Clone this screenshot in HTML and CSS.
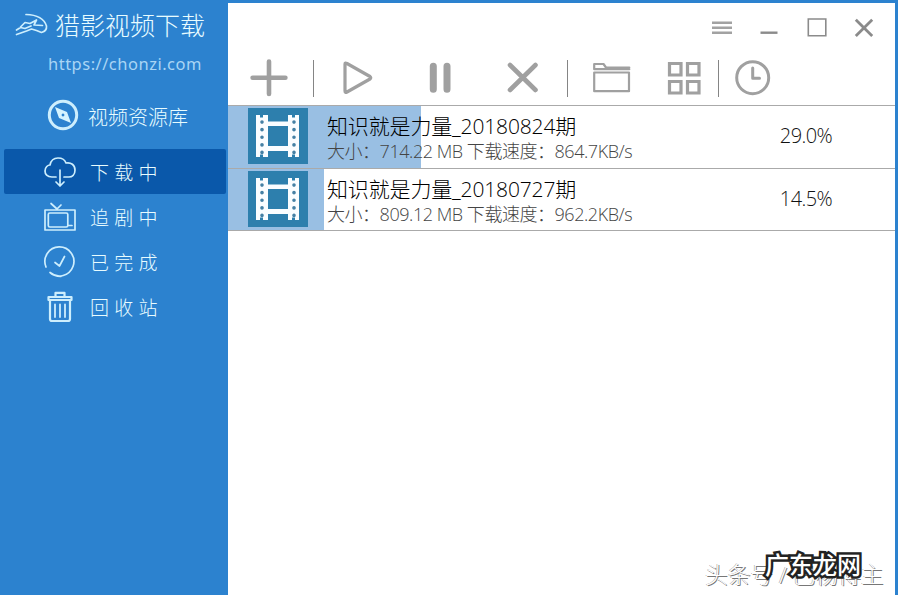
FILE: index.html
```
<!DOCTYPE html>
<html lang="zh-CN">
<head>
<meta charset="utf-8">
<title>猎影视频下载</title>
<link rel="stylesheet" href="styles.css">
</head>
<body>
<div class="window">
  <aside class="sidebar">
    <div class="brand">
      <svg width="34" height="24" viewBox="0 0 34 24"><path d="M11 1.5Q28 2 31.5 13Q32 18 26.5 19.5L21.5 17.5L16.5 16L11.5 18L1.5 21.5M1.5 17L5.5 14.5L10 15.5L16 13M5.5 14L10 9.5L15 10.5L21.5 7L19 12L27.5 12.5"/></svg>
      <span class="brand-name">猎影视频下载</span>
    </div>
    <div class="site">https://chonzi.com</div>
    <nav>
      <a class="item library">
        <svg width="34" height="34" viewBox="0 0 34 34"><circle cx="17" cy="17" r="13.7" stroke-width="3"/><path class="solid" fill-rule="evenodd" d="M9 9L21 14L25 25L13 20ZM17 15.6a1.4 1.4 0 1 0 .01 0Z"/></svg>
        <span>视频资源库</span>
      </a>
      <a class="item active">
        <svg width="34" height="34" viewBox="0 0 34 34"><path d="M13 22H9C4 22 2 19 2 16C2 12 5 10 7 10C8 5 11 3 15 3C19 3 22 5 23 8C28 7 32 10 32 15C32 20 29 22 26 22H21M17 15V31M13 27L17 31L21 27"/></svg>
        <span>下载中</span>
      </a>
      <a class="item">
        <svg width="34" height="34" viewBox="0 0 34 34"><path d="M2 10H32V30H2ZM8 3.5L14 9L18 5"/><rect x="5.3" y="13" width="19.5" height="14" rx="1.5"/><path d="M25 25.5H29"/></svg>
        <span>追剧中</span>
      </a>
      <a class="item">
        <svg width="34" height="34" viewBox="0 0 34 34"><path d="M3 22A14.5 14.5 0 1 1 7 27.5C9 29.5 13 31.5 18 31.4M12 17.5L16.5 21L21.5 11.5"/></svg>
        <span>已完成</span>
      </a>
      <a class="item">
        <svg width="34" height="34" viewBox="0 0 34 34"><path stroke-width="2.2" d="M5.5 7H28.5V10H5.5ZM12.5 6V2.8H21.5V6M7 11V29Q7 31 9 31H25Q27 31 27 29V11"/><path stroke-width="1.8" d="M12 14.5V27M17 14.5V27M22 14.5V27"/></svg>
        <span>回收站</span>
      </a>
    </nav>
  </aside>
  <main class="main">
    <header class="titlebar">
      <svg width="22" height="22" viewBox="0 0 22 22"><path class="light" d="M1 5.8H21M1 10.8H21M1 15.8H21"/></svg>
      <svg width="22" height="22" viewBox="0 0 22 22"><path stroke-width="2.4" d="M2.5 15.7H19.5"/></svg>
      <svg width="22" height="22" viewBox="0 0 22 22"><path stroke-width="1.6" d="M2.3 2H19.8V18.8H2.3Z"/></svg>
      <svg width="22" height="22" viewBox="0 0 22 22"><path stroke-width="2.8" d="M2.8 2.8L19.2 19M19.2 2.8L2.8 19"/></svg>
    </header>
    <div class="toolbar">
      <svg width="40" height="40" viewBox="0 0 40 40"><path stroke-width="4.6" d="M3.6 19.8H36.4M20 3.6V36"/></svg>
      <i class="sep after-add"></i>
      <svg class="play" width="40" height="40" viewBox="0 0 40 40"><path stroke-width="3.2" d="M8 6Q8 4.5 10 5.5L33 18.5Q34.5 19.7 33 21L10 34Q8 35 8 33Z"/></svg>
      <svg class="pause" width="40" height="40" viewBox="0 0 40 40"><path stroke-width="7" d="M13.3 8.2V31.3M27 8.2V31.3"/></svg>
      <svg class="remove" width="40" height="40" viewBox="0 0 40 40"><path stroke-width="4.6" d="M7 7L32.5 32M32.5 7L7 32"/></svg>
      <i class="sep after-remove"></i>
      <svg class="folder" width="40" height="40" viewBox="0 0 40 40"><path stroke-width="2.2" d="M2.2 14.5H37V33.2H2.2ZM2.2 11V6H11.5L14 9.5H37.3M2.2 11.2H37.3"/></svg>
      <svg class="grid" width="40" height="40" viewBox="0 0 40 40"><path stroke-width="3.2" stroke-linejoin="miter" d="M5.5 5.5H17V17H5.5ZM23.5 5.5H35V17H23.5ZM5.5 23.5H17V35H5.5ZM23.5 23.5H35V35H23.5Z"/></svg>
      <i class="sep after-grid"></i>
      <svg class="clock" width="40" height="40" viewBox="0 0 40 40"><circle cx="19.7" cy="19.7" r="16" stroke-width="3"/><path stroke-width="3" d="M19.7 10V20.2H26.5"/></svg>
    </div>
    <section class="list">
      <article class="task">
        <div class="progress" style="width:29%"></div>
        <div class="thumb"><svg width="60" height="56" viewBox="0 0 60 56"><path class="film" fill-rule="evenodd" d="M8 7H12V9.5H15V7H20V13.5H40V7H44V9.5H47V7H51V49H47V46.5H44V49H40V43H20V49H15V46.5H12V49H8ZM20 18V38H40V18Z"/><path class="holes" d="M14 14V47M46 14V47"/></svg></div>
        <div class="info"><div class="name">知识就是力量_20180824期</div><div class="meta">大小：714.22 MB 下载速度：864.7KB/s</div></div>
        <div class="percent">29.0%</div>
      </article>
      <article class="task">
        <div class="progress" style="width:14.4%"></div>
        <div class="thumb"><svg width="60" height="56" viewBox="0 0 60 56"><path class="film" fill-rule="evenodd" d="M8 7H12V9.5H15V7H20V13.5H40V7H44V9.5H47V7H51V49H47V46.5H44V49H40V43H20V49H15V46.5H12V49H8ZM20 18V38H40V18Z"/><path class="holes" d="M14 14V47M46 14V47"/></svg></div>
        <div class="info"><div class="name">知识就是力量_20180727期</div><div class="meta">大小：809.12 MB 下载速度：962.2KB/s</div></div>
        <div class="percent">14.5%</div>
      </article>
    </section>
  </main>
  <div class="author">头条号 / 巴杨博主</div>
  <div class="stamp">广东龙网</div>
</div>
</body>
</html>
```
FILE: styles.css
```
* { box-sizing: border-box; }
body {
  margin: 0;
  font-family: "Open Sans", "Noto Sans CJK SC", sans-serif;
  font-weight: 300;
  overflow: hidden;
}
svg { display: block; flex: none; fill: none; stroke-linecap: round; stroke-linejoin: round; }
.window {
  position: relative;
  display: flex;
  width: 898px;
  height: 595px;
  padding: 3px 3px 0 0;
  background: #2c82cf;
}
.sidebar { width: 228px; flex: none; color: #e8fcff; white-space: nowrap; }
.sidebar svg { stroke: #cdeefd; stroke-width: 1.7; }
.brand { display: flex; align-items: center; height: 44px; padding-left: 15px; gap: 6px; }
.brand-name { font-size: 25px; line-height: 44px; }
.site {
  height: 36px;
  padding-left: 48px;
  font: 400 16.5px/34px "Noto Sans", sans-serif;
  letter-spacing: 0.5px;
  color: #a9d5f5;
}
nav { margin-left: 4px; width: 222px; }
.item {
  display: flex;
  align-items: center;
  height: 45px;
  padding-left: 39px;
  gap: 13px;
  font-size: 19px;
  letter-spacing: 5.2px;
  border-radius: 2px;
}
.library { height: 66px; padding: 0 0 2px 42px; gap: 8px; font-size: 20px; letter-spacing: 0; }
.library span { padding-top: 2px; }
.active { background: #0a58aa; }
.sidebar .solid { fill: #d5f4ff; stroke: none; }
.main { flex: 1; background: #fff; }
.titlebar {
  display: flex;
  justify-content: flex-end;
  height: 48px;
  padding: 14px 20px 0 0;
  gap: 25.5px;
}
.titlebar svg { stroke: #8b8b8b; stroke-linecap: butt; stroke-linejoin: miter; }
.titlebar .light { stroke: #a2a2a2; stroke-width: 2.4; }
.toolbar { display: flex; align-items: center; height: 54px; padding-left: 21px; }
.toolbar svg { stroke: #a0a0a0; }
.sep { width: 1px; height: 37px; background: #858585; }
.after-add, .after-remove, .folder { margin-left: 24px; }
.play { margin-left: 23px; }
.pause, .remove { margin-left: 43px; }
.grid { margin-left: 32px; }
.after-grid, .clock { margin-left: 14px; }
.list { border-top: 1px solid #aaa; }
.task {
  position: relative;
  display: flex;
  height: 62.5px;
  padding-left: 20px;
  border-bottom: 1px solid #aaa;
  white-space: nowrap;
}
.progress { position: absolute; left: 0; top: 0; bottom: 0; background: #99bfe3; }
.thumb { position: relative; width: 60px; height: 56px; margin-top: 2px; background: #2d7fad; }
.thumb .film { fill: #fafdff; }
.thumb .holes { stroke: #4580a4; stroke-width: 3.6; stroke-dasharray: 0.1 7.5; }
.info { position: relative; width: 431px; margin-left: 19px; padding-top: 6px; }
.name { font-size: 21px; line-height: 28px; letter-spacing: -0.15px; color: #000; }
.meta { font-size: 18px; line-height: 22px; letter-spacing: -0.46px; color: #444; }
.percent { width: 74px; text-align: right; font-size: 20px; letter-spacing: -0.6px; line-height: 60px; color: #111; }
.author {
  position: absolute;
  left: 705px;
  top: 561px;
  font-size: 22.7px;
  line-height: 28px;
  color: #fff;
  white-space: nowrap;
  text-shadow: 1px 1px 0 #777, -0.5px -0.5px 0 #999;
}
.stamp {
  position: absolute;
  left: 765px;
  top: 549px;
  font-size: 24px;
  font-weight: 500;
  line-height: 32px;
  color: #fff;
  white-space: nowrap;
  -webkit-text-stroke: 5px #222;
  paint-order: stroke fill;
}
```
